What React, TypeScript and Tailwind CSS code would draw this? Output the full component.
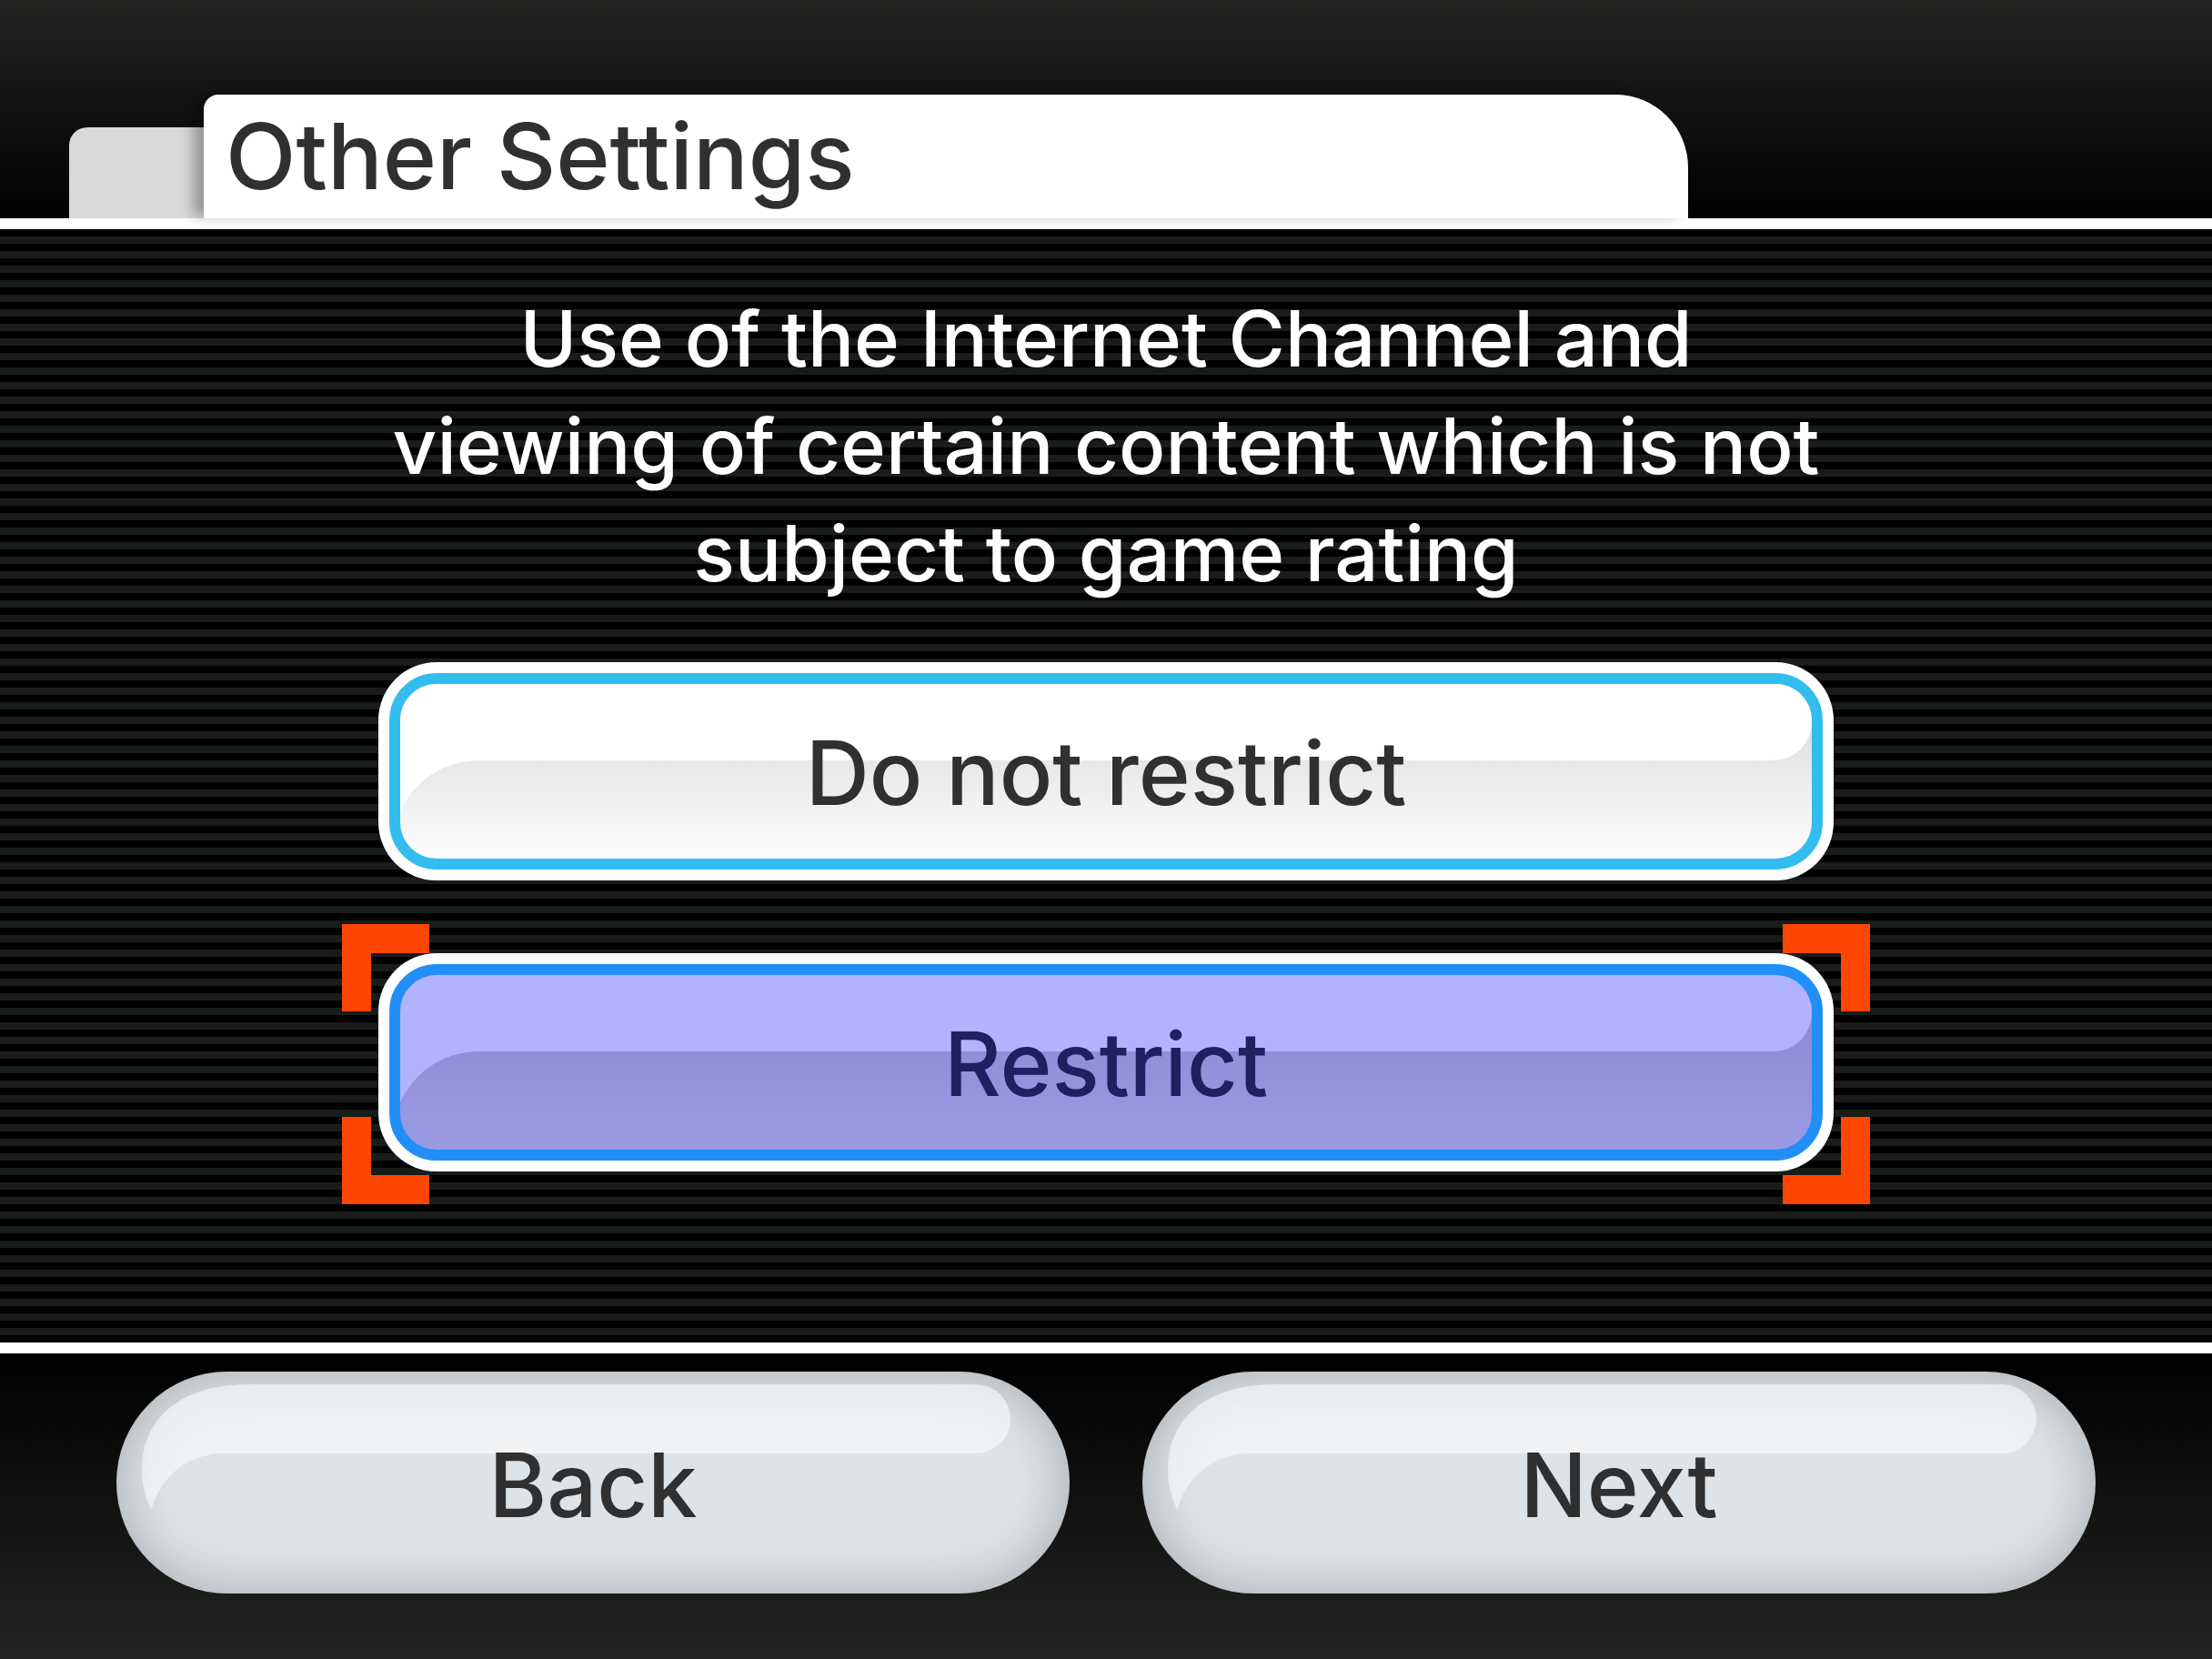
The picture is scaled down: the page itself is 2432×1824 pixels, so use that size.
import type { ReactNode } from "react";

function Bracket({ className }: { className: string }) {
  return <span aria-hidden="true" className={`absolute size-24 border-[#ff4600] ${className}`} />;
}

function Option({ selected = false, children }: { selected?: boolean; children: ReactNode }) {
  return (
    <div className="relative">
      {selected && (
        <>
          <Bracket className="-top-8 -left-10 border-t-32 border-l-32" />
          <Bracket className="-top-8 -right-10 border-t-32 border-r-32" />
          <Bracket className="-bottom-9 -left-10 border-b-32 border-l-32" />
          <Bracket className="-right-10 -bottom-9 border-r-32 border-b-32" />
        </>
      )}
      <button
        type="button"
        aria-pressed={selected}
        className="relative block h-60 w-full rounded-[64px] bg-white p-3"
      >
        <span
          className={`relative flex h-full items-center justify-center overflow-hidden rounded-[52px] border-12 ${
            selected
              ? "border-[#228ff8] bg-linear-to-b/srgb from-[#8c8cd7] from-30% to-[#9b9be5] text-[#1f2060]"
              : "border-[#33bdef] bg-linear-to-b/srgb from-[#e2e1e4] from-30% to-[#fdfdfd] text-[#303030]"
          }`}
        >
          <svg
            aria-hidden="true"
            className={`absolute top-0 left-0 h-full w-[440px] ${selected ? "fill-[#b2b3ff]" : "fill-white"}`}
            viewBox="0 0 440 192"
            preserveAspectRatio="xMinYMin meet"
          >
            <path d="M0 0H440V84H88C48 84 16 106 0 140Z" />
          </svg>
          <span
            className={`absolute top-0 right-0 left-[430px] h-21 rounded-br-[42px] ${
              selected ? "bg-[#b2b3ff]" : "bg-white"
            }`}
          />
          <span className="relative pt-0.5 text-[97px] leading-none">{children}</span>
        </span>
      </button>
    </div>
  );
}

function PillButton({ children }: { children: ReactNode }) {
  return (
    <button
      type="button"
      className="relative flex h-61 flex-1 items-center justify-center overflow-hidden rounded-full bg-[#dde3e7] text-[97px] leading-none text-[#303030] shadow-[inset_0_0_60px_rgba(0,0,0,0.25)]"
    >
      <svg
        aria-hidden="true"
        className="absolute top-3.5 left-7 h-[138px] w-[300px] fill-white/55"
        viewBox="0 0 300 138"
      >
        <path d="M10.500 138C4 125 0 110 0 94C0 36 44 0 118 0H300V76H90C50 76 20 102 10.500 138Z" />
      </svg>
      <span
        aria-hidden="true"
        className="absolute top-3.5 right-[65px] left-[328px] h-19 rounded-r-full bg-white/55"
      />
      <span className="relative pt-1">{children}</span>
    </button>
  );
}

export default function App() {
  return (
    <div className="flex min-h-screen flex-col bg-black font-['Inter',sans-serif] font-medium">
      <header className="flex h-60 shrink-0 items-end bg-linear-to-b/srgb from-[#232522] to-black px-19">
        <div className="h-25 w-37 shrink-0 rounded-tl-[20px] bg-[#d9d9d9]" />
        <div className="relative flex h-34 w-[1632px] items-center rounded-tl-2xl rounded-tr-[80px] bg-white pb-0.5 pl-6 shadow-[-12px_-2px_14px_rgba(0,0,0,0.3)]">
          <h1 className="text-[101px] leading-none text-[#303030]">Other Settings</h1>
        </div>
      </header>

      <main className="flex flex-1 flex-col items-center border-y-12 border-white bg-[repeating-linear-gradient(to_bottom,#000_0,#000_8px,#191d1a_8px,#191d1a_16px)] bg-origin-padding pt-[62px]">
        <p className="text-center text-[85px] leading-[118px] text-white">
          Use of the Internet Channel and
          <br />
          viewing of certain content which is not
          <br />
          subject to game rating
        </p>
        <div className="mt-15 flex w-[1600px] flex-col gap-20">
          <Option>Do not restrict</Option>
          <Option selected>Restrict</Option>
        </div>
      </main>

      <footer className="flex h-84 shrink-0 gap-20 bg-linear-to-b/srgb from-black to-[#232522] px-32 pt-5">
        <PillButton>Back</PillButton>
        <PillButton>Next</PillButton>
      </footer>
    </div>
  );
}
